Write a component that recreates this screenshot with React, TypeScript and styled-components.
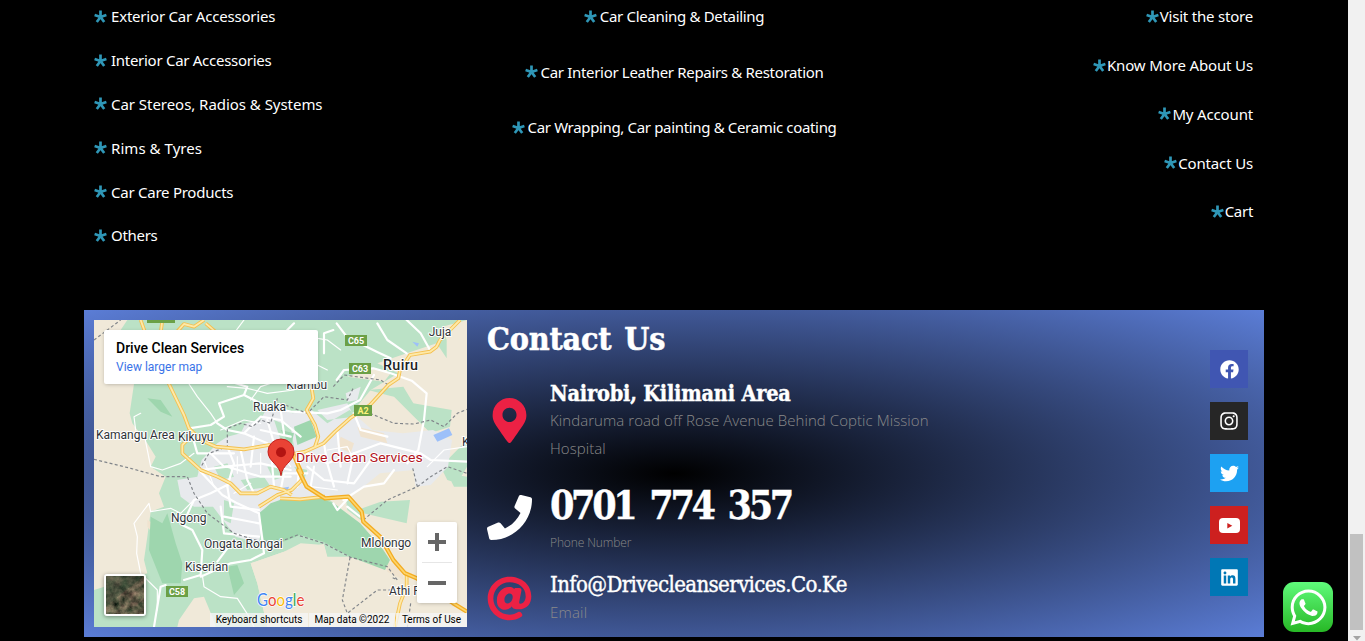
import React from "react";
import styled, { createGlobalStyle } from "styled-components";
import {
  FaAt,
  FaFacebook,
  FaInstagram,
  FaLinkedin,
  FaMapMarkerAlt,
  FaPhone,
  FaTwitter,
  FaWhatsapp,
} from "react-icons/fa";

const GlobalStyle = createGlobalStyle`
  * { box-sizing: border-box; }
  body { margin: 0; background: #000; overflow: hidden; }
`;

const Window = styled.div`
  display: flex;
  width: 1365px;
  height: 641px;
  background: #000;
  overflow: hidden;
`;

const Page = styled.main`
  position: relative;
  width: 1348px;
  padding: 0 84px;
`;

const LinkColumns = styled.section`
  display: grid;
  grid-template-columns: 300px 1fr 300px;
  height: 310px;
  padding: 0 10px;
`;

const LinkList = styled.ul<{ $align: string; $row: number; $gap: number; $shift: number; $end?: number }>`
  list-style: none;
  margin: ${(p) => p.$shift}px 0 0;
  padding: 0 ${(p) => p.$end ?? 0}px 0 0;
  display: flex;
  flex-direction: column;
  align-items: ${(p) => p.$align};
  li {
    height: ${(p) => p.$row}px;
    gap: ${(p) => p.$gap}px;
  }
`;

const LinkItem = styled.li<{ $spacing: number }>`
  display: flex;
  align-items: center;
  font: 15px/20px "Noto Sans", sans-serif;
  letter-spacing: ${(p) => p.$spacing}px;
  color: #fff;
  white-space: nowrap;
  svg {
    flex: none;
  }
`;

const ContactPanel = styled.section`
  display: flex;
  width: 1180px;
  height: 327px;
  padding: 10px;
  background: radial-gradient(at center center, #000 0%, #5b7dd6 100%);
`;

const MapFrame = styled.div`
  position: relative;
  flex: none;
  width: 373px;
  height: 307px;
  overflow: hidden;
  font-family: Roboto, sans-serif;
`;

const PlaceCard = styled.div`
  position: absolute;
  left: 10px;
  top: 10px;
  width: 214px;
  height: 54px;
  padding: 9px 12px;
  background: #fff;
  border-radius: 2px;
  box-shadow: 0 1px 4px -1px rgba(0, 0, 0, 0.3);
`;

const PlaceName = styled.div`
  font: 500 14px/18px Roboto, sans-serif;
  color: #000;
`;

const PlaceLink = styled.div`
  margin-top: 2px;
  font: 12px/16px Roboto, sans-serif;
  color: #3a73e8;
`;

const ZoomControl = styled.div`
  position: absolute;
  right: 10px;
  top: 202px;
  width: 40px;
  height: 81px;
  display: flex;
  flex-direction: column;
  align-items: center;
  background: #fff;
  border-radius: 2px;
  box-shadow: 0 1px 4px -1px rgba(0, 0, 0, 0.3);
`;

const ZoomRule = styled.div`
  width: 30px;
  height: 1px;
  background: #e6e6e6;
`;

const Thumb = styled.div`
  position: absolute;
  left: 10px;
  top: 254px;
  width: 42px;
  height: 42px;
  border: 2px solid #fff;
  border-radius: 3px;
  box-shadow: 0 1px 4px rgba(0, 0, 0, 0.4);
  overflow: hidden;
  background: #57574a;
`;

const MapTerms = styled.div`
  position: absolute;
  right: 0;
  bottom: 0;
  display: flex;
  height: 14px;
  gap: 1px;
  font: 10px/14px Roboto, sans-serif;
  color: #000;
`;

const Term = styled.span<{ $width: number }>`
  width: ${(p) => p.$width}px;
  text-align: center;
  background: rgba(245, 245, 245, 0.8);
  white-space: nowrap;
`;

const Details = styled.div`
  flex: 1;
  padding-left: 20px;
`;

const Heading = styled.h2`
  margin: -1px 0 0;
  height: 41px;
  font: 700 32px/40px "DejaVu Serif Condensed", "DejaVu Serif", serif;
  font-stretch: condensed;
  letter-spacing: -0.2px;
  word-spacing: 3px;
  -webkit-text-stroke: 0.5px #fff;
  color: #fff;
`;

const Detail = styled.div<{ $top: number; $iconTop: number }>`
  display: flex;
  margin-top: ${(p) => p.$top}px;
  > svg {
    flex: none;
    margin-top: ${(p) => p.$iconTop}px;
  }
`;

const DetailText = styled.div`
  width: 420px;
  margin-left: 18px;
`;

const DetailTitle = styled.h3<{
  $size: number;
  $line: number;
  $spacing: number;
  $words?: number;
  $weight?: number;
}>`
  margin: 0;
  font: ${(p) => p.$weight ?? 700} ${(p) => p.$size}px/${(p) => p.$line}px "DejaVu Serif Condensed", "DejaVu Serif", serif;
  font-stretch: condensed;
  letter-spacing: ${(p) => p.$spacing}px;
  word-spacing: ${(p) => p.$words ?? 0}px;
  -webkit-text-stroke: 0.4px #fff;
  color: #fff;
  white-space: nowrap;
`;

const DetailNote = styled.p<{ $size: number; $spacing: number; $up?: number }>`
  margin: -${(p) => p.$up ?? 0}px 0 0;
  font: 300 ${(p) => p.$size}px/28px "Open Sans", sans-serif;
  letter-spacing: ${(p) => p.$spacing}px;
  color: #8a8a8a;
`;

const Socials = styled.nav`
  display: flex;
  flex-direction: column;
  gap: 14px;
  padding: 30px 6px 0 0;
`;

const Social = styled.a<{ $color: string }>`
  display: flex;
  align-items: center;
  justify-content: center;
  width: 38px;
  height: 38px;
  color: #fff;
  background: ${(p) => p.$color};
`;

const ChatButton = styled.a`
  position: absolute;
  right: 15px;
  top: 582px;
  display: flex;
  align-items: center;
  justify-content: center;
  width: 50px;
  height: 50px;
  border-radius: 11px;
  color: #fff;
  background: linear-gradient(#5ffb7b, #28b826);
`;

const Scrollbar = styled.div`
  width: 17px;
  height: 641px;
  padding: 534px 2px 0;
  background: #f1f1f1;
`;

const ScrollThumb = styled.div`
  height: 96px;
  background: #c1c1c1;
`;

const ScrollArrow = styled.svg`
  display: block;
  margin: 6px auto 0;
`;

type Row = [string, number];

const accessories: Row[] = [
  ["Exterior Car Accessories", -0.2],
  ["Interior Car Accessories", -0.28],
  ["Car Stereos, Radios & Systems", -0.04],
  ["Rims & Tyres", 0.05],
  ["Car Care Products", -0.25],
  ["Others", -0.3],
];
const services: Row[] = [
  ["Car Cleaning & Detailing", -0.32],
  ["Car Interior Leather Repairs & Restoration", -0.32],
  ["Car Wrapping, Car painting & Ceramic coating", -0.34],
];
const pages: Row[] = [
  ["Visit the store", -0.2],
  ["Know More About Us", -0.14],
  ["My Account", -0.16],
  ["Contact Us", -0.16],
  ["Cart", -0.3],
];

const Star = () => (
  <svg width="13" height="13" viewBox="0 0 13 13">
    <path d="M6.5 7V.6M6.5 7 .6 5M6.5 7l5.9-2M6.5 7l-3.7 5M6.5 7l3.7 5" stroke="#2f97b7" strokeWidth="2.7" />
  </svg>
);

const Links = ({
  rows,
  ...rest
}: {
  rows: Row[];
  $align: string;
  $row: number;
  $gap: number;
  $shift: number;
  $end?: number;
}) => (
  <LinkList {...rest}>
    {rows.map(([label, spacing]) => (
      <LinkItem key={label} $spacing={spacing}>
        <Star />
        <span>{label}</span>
      </LinkItem>
    ))}
  </LinkList>
);

const highways = [
  "M140 0 155 42 225 192 270 285 285 325 320 360 365 380 450 388 525 375 598 402",
  "M300 340 265 375 265 400 320 450 370 470 410 490 440 520 490 520 530 500 570 510 593 525",
  "M205 0 200 40M245 40 270 12 300 20 330 0M335 10 370 40",
  "M1098 0 1068 30 1038 60 1028 80 1008 95 948 105 918 150 913 175 883 195 828 255 768 295 723 335 688 370 633 395 598 402",
  "M653 205 658 235 638 270 663 315 673 350 663 380",
  "M938 765 938 800 918 850 903 921",
  "M495 560 550 525 593 510 623 480",
  "M558 535 618 538 693 530",
];
const trunk =
  "M598 402 623 460 613 450 638 500 693 535 763 530 803 575 808 605 858 650 898 720 933 760 968 775 1078 850 1119 875";

const whiteRoads = [
  "M180 921 185 890 200 800 215 795M270 780 320 765 325 690 295 630 265 615 300 540 350 520 410 490",
  "M370 725 400 685 M320 770 410 730 470 720 510 700 495 580 430 550 385 525 315 450",
  "M285 325 350 315 390 290 375 250 450 225 460 200 410 185 380 150",
  "M370 310 400 330 450 340 520 370M450 225 520 260 590 275 700 280 740 270 798 240 840 165",
  "M728 10 758 50 848 95 890 115M728 180 750 150 838 145 890 160 953 182 998 220 990 300 973 390 940 430",
  "M938 0 980 40 1008 90M850 10 880 60 938 100M718 30 690 40 690 100M560 50 600 10",
  "M640 400 700 430 780 400 860 370 980 400 1010 420 1119 425M780 280 800 330 880 350",
  "M700 430 720 500M640 440 690 480 780 490 830 420M780 400 760 490M690 370 700 430",
  "M450 340 500 290 560 300 620 350M520 300 540 370M400 380 420 430 400 500M350 400 390 440 500 430 590 450",
  "M320 450 400 440 500 470 590 470M440 390 460 480 480 520M530 380 540 500M400 500 410 560 495 570",
  "M390 590 495 610M380 560 390 640 495 650M560 510 570 460 640 460M290 330 310 400 420 400",
  "M500 330 590 350M480 350 470 440M560 270 570 340M730 330 740 440M620 400 610 500M660 440 650 500",
  "M763 535 730 570 718 550M748 540 810 500 870 490 900 450M798 590 760 560",
];
const thinRoads = [
  "M170 575 165 550 150 570 120 610 130 650 128 700 140 760 190 810 190 870",
  "M170 575 200 570 230 565 260 580 300 540M325 765 330 800 380 830 430 835 465 890 480 921",
  "M285 192 310 230 350 280 370 310M140 280 120 290 125 330M150 340 170 440 205 450 260 430 300 400",
  "M420 40 450 0M400 200 460 205 520 220 600 210M470 240 500 200 560 180M560 70 600 110 660 130",
  "M640 50 700 60 740 90M560 140 640 120 700 150M480 150 520 190 600 170 640 190",
  "M380 330 450 300 500 310M330 420 360 500M420 520 470 490M430 410 430 460M500 400 500 460",
  "M700 390 760 380 780 420M650 500 730 510M560 400 590 440M1000 440 1050 390 1119 380",
];
const borders = [
  "M0 60 40 30 80 0M0 418 110 445 200 470 280 470 300 520 340 580 420 640 500 665 570 660",
  "M558 665 610 645 690 670 770 712 880 740 910 780 890 770M768 712 745 840 760 880 850 810 900 810M950 850 940 921",
  "M718 200 750 165 860 180 883 195M828 280 900 310 960 312 1010 300 1050 320 1090 280 1119 268",
  "M315 450 345 400 400 380 400 325 440 310 475 320 500 300 530 310 550 235M560 250 640 280 690 230 760 240 780 200",
  "M808 600 880 540 970 500 955 440M970 500 1010 470 1060 440 1119 460",
];

const towns: [string, number, number][] = [
  ["Juja", 1004, 47],
  ["Kiambu", 577, 206],
  ["Ruaka", 477, 274],
  ["Kamangu Area", 6, 356],
  ["Kikuyu", 252, 364],
  ["Ngong", 231, 605],
  ["Ongata Rongai", 330, 685],
  ["Kiserian", 273, 754],
  ["Mlolongo", 801, 682],
  ["Athi River", 885, 826],
  ["K", 1104, 377],
];

const shields: [string, number, number, number, string][] = [
  ["C65", 753, 45, 66, "#fff"],
  ["C63", 765, 129, 66, "#fff"],
  ["A2", 780, 255, 54, "#fff37a"],
  ["C58", 216, 798, 66, "#fff"],
];

const MapArt = () => (
  <svg width="373" height="307" viewBox="0 0 1119 921" fontFamily="Roboto, sans-serif">
    <rect width="1119" height="921" fill="#f0e9d9" />
    <path fill="#bbe2c6" d="M100 0 80 30 120 192 107 280 115 310 160 370 185 410 170 440 215 470 195 520 210 560 170 575 160 650 150 720 160 760 0 810V921H250L255 900 300 835 330 830 355 890 365 921H520L490 790 470 730 570 695 700 670 868 690 788 500 788 260 830 210 913 160 850 130 938 100 1028 70 1058 115 1058 60 1040 0Z" />
    <path fill="#bbe2c6" d="M823 210 928 200 958 250 1073 270 1068 320 1008 340 958 290 898 230ZM1045 20 1119 0H1020ZM1040 440 1119 360V440L1090 490 1060 480ZM1060 460 1119 470V500H1080ZM688 665 700 710 868 710 768 680Z" />
    <path fill="#f0e9d9" d="M570 695 620 670 690 675 700 715 768 712 873 750 888 720 970 700 970 921H520L490 790 470 730ZM788 260 850 230 900 230 960 290 1010 340 900 330 850 290 800 300ZM830 145 890 160 870 185 760 170ZM700 535 788 500 860 460 900 560 868 690 798 610Z" />
    <path fill="#bbe2c6" d="M755 530 790 570 860 545 948 540 938 610 808 580 800 600 760 570Z" />
    <path fill="#e8eaed" d="M596 280 520 260 500 300 455 310 440 340 400 350 370 370 323 420 310 470 250 480 260 530 300 560 357 560 425 650 494 670 516 570 558 540 676 535 767 535 858 460 958 450 965 500 1010 495 1062 440 1074 360 1017 330 926 340 835 330 767 270 700 310 653 270ZM755 220 800 200 790 240 760 245ZM670 270 760 250 780 290 700 300Z" />
    <path fill="#f0e3cf" d="M790 320 870 340 880 370 800 350ZM875 725 920 740 930 780 880 755ZM160 600 178 610 176 640 160 620ZM740 350 780 370 770 400 730 380Z" />
    <path fill="#bbe2c6" d="M360 440 400 430 420 470 380 480ZM520 440 560 430 570 470 540 480ZM440 480 510 470 530 500 460 510ZM390 540 420 550 410 610 390 600ZM600 440 640 450 630 480ZM540 300 590 320 600 380 560 360Z" />
    <path fill="#9ed6ae" d="M495 580 530 550 558 540 668 530 718 550 798 610 868 690 888 720 873 750 768 710 688 665 618 645 568 665 510 660ZM170 590 205 610 220 580 245 670 265 730 260 790 205 790 165 690ZM400 740 430 735 450 790 420 825ZM600 320 650 300 668 350 610 375ZM560 330 600 340 590 380ZM160 235 200 240 235 290 200 275Z" />
    <path fill="#9dc0f9" d="M1018 345 1065 325 1075 345 1030 365ZM955 65 975 70 970 80ZM560 505 585 500 580 515Z" />
    <g fill="none" stroke="#fff" strokeLinejoin="round" strokeLinecap="round">
      <g strokeWidth="3.5">{thinRoads.map((d) => <path key={d} d={d} />)}</g>
      <g strokeWidth="6.5">{whiteRoads.map((d) => <path key={d} d={d} />)}</g>
    </g>
    <g fill="none" stroke="#81858a" strokeWidth="3.5" strokeDasharray="9 7">
      {borders.map((d) => <path key={d} d={d} />)}
    </g>
    <g fill="none" strokeLinejoin="round">
      <g stroke="#f4c04f" strokeWidth="11">{highways.map((d) => <path key={d} d={d} />)}</g>
      <g stroke="#fee9a8" strokeWidth="5.5">{highways.map((d) => <path key={d} d={d} />)}</g>
      <path d={trunk} stroke="#f3ac22" strokeWidth="13" />
      <path d={trunk} stroke="#fdd56c" strokeWidth="5" />
    </g>
    <rect x="159" y="-10" width="84" height="19" fill="#6ba046" />
    {shields.map(([label, x, y, w, fill]) => (
      <g key={label}>
        <rect x={x} y={y} width={w} height="33" fill="#6ba046" />
        <text x={x + w / 2} y={y + 26} textAnchor="middle" fontSize="27" fontWeight="700" fill={fill}>
          {label}
        </text>
      </g>
    ))}
    <g fill="#303438" stroke="#fff" strokeWidth="6" strokeLinejoin="round" paintOrder="stroke" fontSize="36">
      {towns.map(([name, x, y]) => (
        <text key={name} x={x} y={y}>{name}</text>
      ))}
      <text x="867" y="151" fontSize="43" fontWeight="500" fill="#202124" textLength="105">Ruiru</text>
      <text x="606" y="426" fontSize="41" fill="#b3141c" textLength="380" lengthAdjust="spacingAndGlyphs">
        Drive Clean Services
      </text>
    </g>
    <path d="M561 467c-3-34-39-42-39-72a39 38 0 0 1 78 0c0 30-36 38-39 72Z" fill="#ea4335" stroke="#c5221f" strokeWidth="3" />
    <circle cx="561" cy="397" r="15" fill="#b31412" />
    <g fontSize="52" fontFamily="Lato, sans-serif" stroke="#fff" strokeWidth="4" paintOrder="stroke">
      <text x="489" y="857" textLength="142" lengthAdjust="spacingAndGlyphs">
        <tspan fill="#4285f4">G</tspan>
        <tspan fill="#ea4335">o</tspan>
        <tspan fill="#fbbc05">o</tspan>
        <tspan fill="#4285f4">g</tspan>
        <tspan fill="#34a853">l</tspan>
        <tspan fill="#ea4335">e</tspan>
      </text>
    </g>
  </svg>
);

const Satellite = () => (
  <svg width="38" height="38">
    <filter id="terrain" x="0" y="0" width="100%" height="100%" colorInterpolationFilters="sRGB">
      <feTurbulence type="fractalNoise" baseFrequency="0.13" numOctaves="4" seed="8" />
      <feColorMatrix values="0.7 0.2 0 0 -0.08  0.5 0.3 0 0 -0.05  0.45 0.2 0 0 -0.05  0 0 0 0 1" />
    </filter>
    <rect width="38" height="38" filter="url(#terrain)" />
    <path d="M0 0H38L0 30Z" fill="#1f3b2b" opacity=".35" />
  </svg>
);

const socials: [string, React.ReactNode][] = [
  ["#4056b2", <FaFacebook size={19} />],
  ["#262626", <FaInstagram size={20} />],
  ["#1da1f2", <FaTwitter size={19} />],
  [
    "#cd201f",
    <svg width="21" height="15" viewBox="0 0 21 15">
      <rect width="21" height="15" rx="4" fill="#fff" />
      <path d="M8.3 5v5.4l5-2.7Z" fill="#cd201f" />
    </svg>,
  ],
  ["#0077b5", <FaLinkedin size={19} />],
];

export default function App() {
  return (
    <Window>
      <GlobalStyle />
      <Page>
        <LinkColumns>
          <Links rows={accessories} $align="flex-start" $row={43.8} $gap={4} $shift={-5.5} />
          <Links rows={services} $align="center" $row={55.5} $gap={3} $shift={-11.5} />
          <Links rows={pages} $align="flex-end" $row={48.75} $gap={1} $shift={-8} $end={1} />
        </LinkColumns>
        <ContactPanel>
          <MapFrame>
            <MapArt />
            <PlaceCard>
              <PlaceName>Drive Clean Services</PlaceName>
              <PlaceLink>View larger map</PlaceLink>
            </PlaceCard>
            <ZoomControl>
              <svg width="40" height="40"><path d="M11 20h18M20 11v18" stroke="#666" strokeWidth="4" /></svg>
              <ZoomRule />
              <svg width="40" height="40"><path d="M11 20h18" stroke="#666" strokeWidth="4" /></svg>
            </ZoomControl>
            <Thumb><Satellite /></Thumb>
            <MapTerms>
              <Term $width={98}>Keyboard shortcuts</Term>
              <Term $width={86}>Map data ©2022</Term>
              <Term $width={71}>Terms of Use</Term>
            </MapTerms>
          </MapFrame>
          <Details>
            <Heading>Contact Us</Heading>
            <Detail $top={20} $iconTop={18}>
              <FaMapMarkerAlt size={45} color="#ec2144" />
              <DetailText>
                <DetailTitle $size={21.5} $line={28} $spacing={-0.2}>Nairobi, Kilimani Area</DetailTitle>
                <DetailNote $size={15} $spacing={0.07} $up={2}>
                  Kindaruma road off Rose Avenue Behind Coptic Mission Hospital
                </DetailNote>
              </DetailText>
            </Detail>
            <Detail $top={19} $iconTop={14}>
              <FaPhone size={45} color="#fff" />
              <DetailText>
                <DetailTitle $size={39} $line={48} $spacing={-3.3} $words={6}>0701 774 357</DetailTitle>
                <DetailNote $size={12} $spacing={-0.12}>Phone Number</DetailNote>
              </DetailText>
            </Detail>
            <Detail $top={14} $iconTop={5}>
              <FaAt size={45} color="#ec2144" />
              <DetailText>
                <DetailTitle $size={22} $line={28} $spacing={-0.62} $weight={400}>
                  Info@Drivecleanservices.Co.Ke
                </DetailTitle>
                <DetailNote $size={15} $spacing={0.2} $up={1}>Email</DetailNote>
              </DetailText>
            </Detail>
          </Details>
          <Socials>
            {socials.map(([color, icon]) => (
              <Social key={color} $color={color}>{icon}</Social>
            ))}
          </Socials>
        </ContactPanel>
        <ChatButton><FaWhatsapp size={41} /></ChatButton>
      </Page>
      <Scrollbar>
        <ScrollThumb />
        <ScrollArrow width="8" height="5"><path d="M0 0h8L4 4.5Z" fill="#a3a3a3" /></ScrollArrow>
      </Scrollbar>
    </Window>
  );
}
